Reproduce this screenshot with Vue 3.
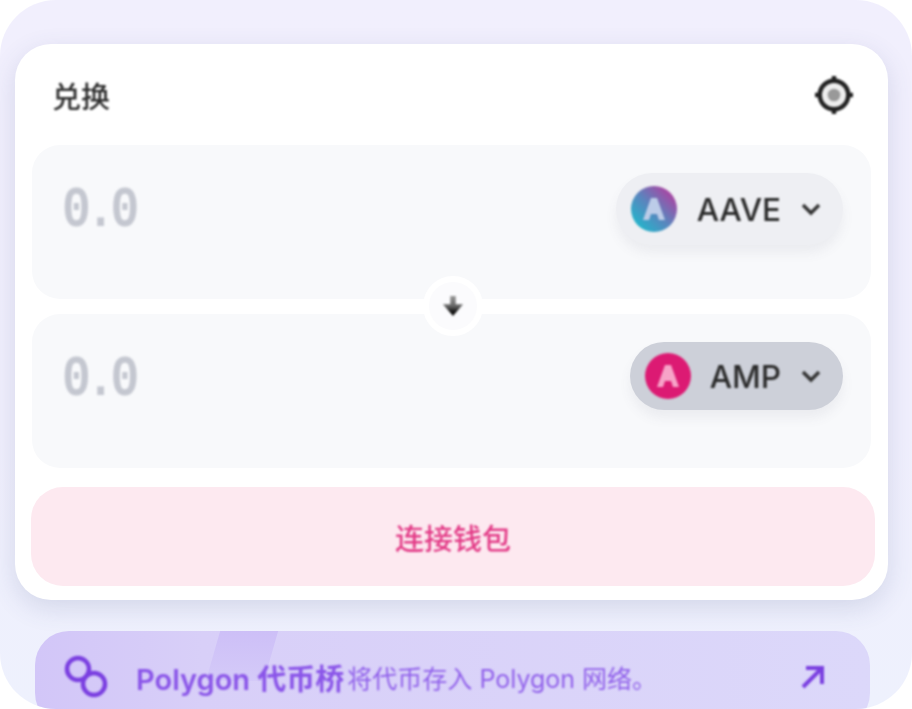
<script setup>
const panels = [
  { id: 'from', amount: '0.0', symbol: 'AAVE', pill: 'pill', icon: 'aave' },
  { id: 'to', amount: '0.0', symbol: 'AMP', pill: 'pill pill-active', icon: 'amp' },
];
</script>

<template>
  <div class="shell">
    <div class="card">
      <div class="card-head">
        <span class="title soft">兑换</span>
        <svg class="gear soft" viewBox="0 0 24 24" fill="none" stroke="#222" stroke-width="2.8">
          <circle cx="12" cy="12" r="9" fill="#eee" />
          <path d="M12 0v4M12 20v4M0 12h4M20 12h4" />
          <circle cx="12" cy="12" r="3.500" fill="#999" stroke="#999" stroke-width="1" />
        </svg>
      </div>

      <div class="panels">
        <div v-for="p in panels" :key="p.id" class="panel">
          <span class="amount soft">{{ p.amount }}</span>
          <div :class="p.pill">
            <svg class="token soft" viewBox="0 0 46 46">
              <defs>
                <linearGradient id="aaveGrad" x1="0.1" y1="0.9" x2="0.9" y2="0.1">
                  <stop offset="0" stop-color="#1fb8cc" />
                  <stop offset="0.5" stop-color="#5c83bd" />
                  <stop offset="1" stop-color="#b13fa0" />
                </linearGradient>
              </defs>
              <circle cx="23" cy="23" r="23" :fill="p.icon === 'aave' ? 'url(#aaveGrad)' : '#dc1a73'" />
              <path
                d="M12 34L20 12h6l8 22h-6l-2-6h-6l-2 6z"
                :fill="p.icon === 'aave' ? '#bccce8' : '#f7a3c8'"
              />
            </svg>
            <span class="symbol soft">{{ p.symbol }}</span>
            <svg class="chevron soft" viewBox="0 0 20 20" fill="none" stroke="#333" stroke-width="3.500">
              <path d="M2 6l8 8 8-8" />
            </svg>
          </div>
        </div>

        <div class="swap">
          <svg class="swap-arrow soft" viewBox="0 0 24 24">
            <defs>
              <linearGradient id="arrowGrad" x1="0" y1="0" x2="0" y2="1">
                <stop offset="0" stop-color="#999" />
                <stop offset="0.5" stop-color="#666" />
                <stop offset="0.8" stop-color="#111" />
              </linearGradient>
            </defs>
            <path fill="url(#arrowGrad)" d="M9 1h6v9h8L12 23 1 10h8z" />
          </svg>
        </div>
      </div>

      <div class="connect"><span class="soft">连接钱包</span></div>
    </div>

    <div class="banner">
      <div class="stripe"></div>
      <svg class="link-icon soft" viewBox="0 0 46 46" fill="none" stroke="#7a3fe0" stroke-width="4.500">
        <circle cx="15" cy="15" r="11" />
        <circle cx="31" cy="30" r="11" />
      </svg>
      <span class="banner-title soft">Polygon 代币桥</span>
      <span class="banner-text soft">将代币存入 Polygon 网络。</span>
      <svg class="out-icon soft" viewBox="0 0 28 28" fill="none" stroke="#7a3fe0" stroke-width="4">
        <path d="M5 24L23 6M8 5h16v16" />
      </svg>
    </div>
  </div>
</template>

<style scoped>
.shell {
  width: 912px;
  height: 709px;
  box-sizing: border-box;
  padding: 44px 24px 0 15px;
  border-radius: 56px;
  overflow: hidden;
  background: linear-gradient(180deg, #f1effd 0%, #f0effd 60%, #eef1fd 100%);
  font-family: Inter, "Noto Sans CJK SC", sans-serif;
}

.soft {
  filter: blur(1.1px);
}

.card {
  box-sizing: border-box;
  width: 873px;
  height: 556px;
  padding: 0 17px;
  background: #fff;
  border-radius: 36px;
  box-shadow: 0 8px 26px rgba(70, 80, 130, 0.16);
}

.card-head {
  height: 101px;
  padding: 0 18px 0 20px;
  display: flex;
  align-items: center;
  justify-content: space-between;
}

.title {
  font-size: 29px;
  font-weight: 500;
  color: #2e2e2e;
}

.gear {
  width: 38px;
  height: 38px;
}

.panels {
  position: relative;
  width: 839px;
  display: flex;
  flex-direction: column;
  gap: 15px;
}

.panel {
  box-sizing: border-box;
  height: 154px;
  padding: 0 28px 0 30px;
  display: flex;
  align-items: flex-start;
  justify-content: space-between;
  background: #f8f9fb;
  border-radius: 28px;
}

.amount {
  margin-top: 37px;
  font-family: "Liberation Mono", monospace;
  font-size: 48px;
  font-weight: 700;
  letter-spacing: -4.5px;
  line-height: 56px;
  color: #c4c7d0;
  transform: scaleY(1.2);
}

.pill {
  box-sizing: border-box;
  height: 72px;
  margin-top: 28px;
  padding: 0 22px 0 15px;
  display: flex;
  align-items: center;
  background: #eeeff3;
  border-radius: 36px;
  box-shadow: 0 8px 12px rgba(90, 95, 120, 0.08);
}

.pill-active {
  height: 68px;
  background: #cdd0d9;
}

.token {
  width: 46px;
  height: 46px;
  flex: none;
}

.symbol {
  margin-left: 20px;
  font-size: 31.5px;
  font-weight: 500;
  color: #2a2a2a;
}

.pill-active .symbol {
  margin-left: 19px;
}

.chevron {
  width: 20px;
  height: 20px;
  margin-left: 20px;
}

.swap {
  position: absolute;
  left: 391px;
  top: 131px;
  box-sizing: border-box;
  width: 60px;
  height: 60px;
  display: flex;
  align-items: center;
  justify-content: center;
  background: #fbfbfd;
  border: 6px solid #fff;
  border-radius: 50%;
}

.swap-arrow {
  width: 22px;
  height: 22px;
}

.connect {
  width: 844px;
  height: 99px;
  margin: 19px 0 0 -1px;
  display: flex;
  align-items: center;
  justify-content: center;
  background: #fde9f0;
  border-radius: 32px;
  color: #e23a86;
  font-size: 29px;
  font-weight: 500;
}

.banner {
  position: relative;
  overflow: hidden;
  box-sizing: border-box;
  width: 835px;
  height: 96px;
  margin: 31px 0 0 20px;
  padding: 0 44px 4px 28px;
  display: flex;
  align-items: center;
  background: linear-gradient(90deg, #d2c6f8 0, #d8cff8 20%, #dcd8fa 100%);
  border-radius: 34px;
}

.stripe {
  position: absolute;
  left: 178px;
  top: 0;
  width: 58px;
  height: 50px;
  background: linear-gradient(180deg, #cdbff7, #d4caf8);
  transform: skewX(-16deg);
}

.link-icon {
  position: relative;
  width: 46px;
  height: 46px;
}

.banner-title {
  position: relative;
  margin-left: 27px;
  font-size: 29px;
  font-weight: 600;
  color: #8a55e8;
}

.banner-text {
  position: relative;
  margin-left: 3px;
  flex: 1;
  font-size: 25px;
  color: #9060ea;
}

.out-icon {
  position: relative;
  width: 28px;
  height: 28px;
}
</style>

<style>
html, body {
  background: #fff;
}
</style>
